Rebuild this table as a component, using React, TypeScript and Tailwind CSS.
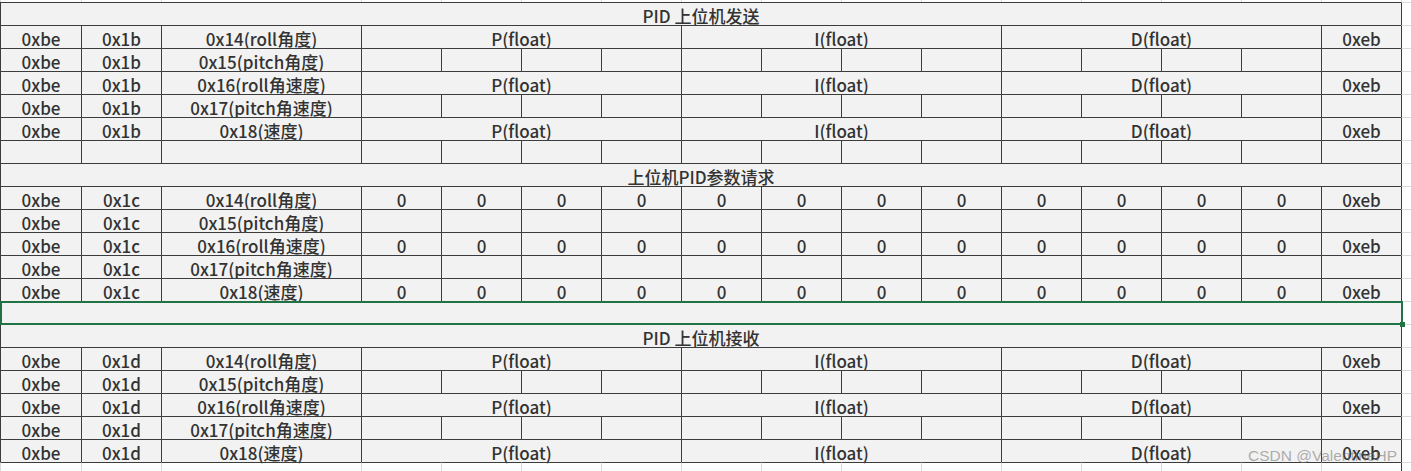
import React from "react"

type Mode = "pid" | "empty" | "zeros"

type Row =
  | { kind: "title"; text: string }
  | { kind: "data"; a: string; b: string; c: string; mode: Mode }
  | { kind: "blank" }
  | { kind: "selected" }

const names = ["0x14(roll角度)", "0x15(pitch角度)", "0x16(roll角速度)", "0x17(pitch角速度)", "0x18(速度)"]

function section(id: string, full: Mode): Row[] {
  return names.map((c, i) => ({ kind: "data", a: "0xbe", b: id, c, mode: i % 2 === 0 ? full : "empty" }))
}

const rows: Row[] = [
  { kind: "title", text: "PID 上位机发送" },
  ...section("0x1b", "pid"),
  { kind: "blank" },
  { kind: "title", text: "上位机PID参数请求" },
  ...section("0x1c", "zeros"),
  { kind: "selected" },
  { kind: "title", text: "PID 上位机接收" },
  ...section("0x1d", "pid"),
]

const cell =
  "flex items-center justify-center pt-[2px] border-l border-t border-l-[#3c3c3c] border-t-[#3c3c3c] bg-[#f2f2f2] whitespace-nowrap"

// light column past the table's right edge
function Margin() {
  return <div className="border-l border-t border-l-[#3c3c3c] border-t-[#d9d9d9] bg-white" />
}

function TableRow({ row }: { row: Row }) {
  if (row.kind === "title") {
    return (
      <>
        <div className={`${cell} col-span-16`}>{row.text}</div>
        <Margin />
      </>
    )
  }

  if (row.kind === "blank") {
    return (
      <>
        {Array.from({ length: 16 }).map((_, i) => (
          <div key={i} className={cell} />
        ))}
        <Margin />
      </>
    )
  }

  if (row.kind === "selected") {
    return (
      <>
        <div className={`${cell} col-span-16 relative`}>
          <div className="absolute -top-px -left-px -right-[2px] -bottom-px z-10 border-2 border-[#217346]" />
          <div className="absolute -right-[4px] -bottom-[3px] z-20 h-[5px] w-[5px] bg-[#217346]" />
        </div>
        <Margin />
      </>
    )
  }

  return (
    <>
      <div className={cell}>{row.a}</div>
      <div className={cell}>{row.b}</div>
      <div className={cell}>{row.c}</div>
      {row.mode === "pid" && (
        <>
          <div className={`${cell} col-span-4`}>P(float)</div>
          <div className={`${cell} col-span-4`}>I(float)</div>
          <div className={`${cell} col-span-4`}>D(float)</div>
          <div className={cell}>0xeb</div>
        </>
      )}
      {row.mode === "zeros" && (
        <>
          {Array.from({ length: 12 }).map((_, i) => (
            <div key={i} className={cell}>
              0
            </div>
          ))}
          <div className={cell}>0xeb</div>
        </>
      )}
      {row.mode === "empty" &&
        Array.from({ length: 13 }).map((_, i) => <div key={i} className={cell} />)}
      <Margin />
    </>
  )
}

export default function App() {
  return (
    <div className="relative h-[471px] w-[1411px] overflow-hidden bg-white font-['Noto_Sans_CJK_SC','Microsoft_YaHei',sans-serif] text-[17px] font-medium leading-none text-[#333333]">
      <div className="grid grid-cols-[81px_80px_200px_repeat(12,80px)_80px_10px] grid-rows-[2px_repeat(20,23px)_9px]">
        {Array.from({ length: 17 }).map((_, i) => (
          <div key={`t${i}`} className="border-l border-[#d9d9d9]" />
        ))}

        {rows.map((row, i) => (
          <TableRow key={i} row={row} />
        ))}

        {Array.from({ length: 16 }).map((_, i) => (
          <div key={`b${i}`} className="border-l border-t border-l-[#d9d9d9] border-t-[#3c3c3c]" />
        ))}
        <div className="border-l border-t border-l-[#3c3c3c] border-t-[#d9d9d9]" />
      </div>

      <div className="absolute right-[14px] bottom-[8px] z-30 font-['Liberation_Sans',sans-serif] text-[15.5px] font-normal text-[rgba(110,110,110,0.55)]">
        CSDN @ValentineHP
      </div>
    </div>
  )
}
